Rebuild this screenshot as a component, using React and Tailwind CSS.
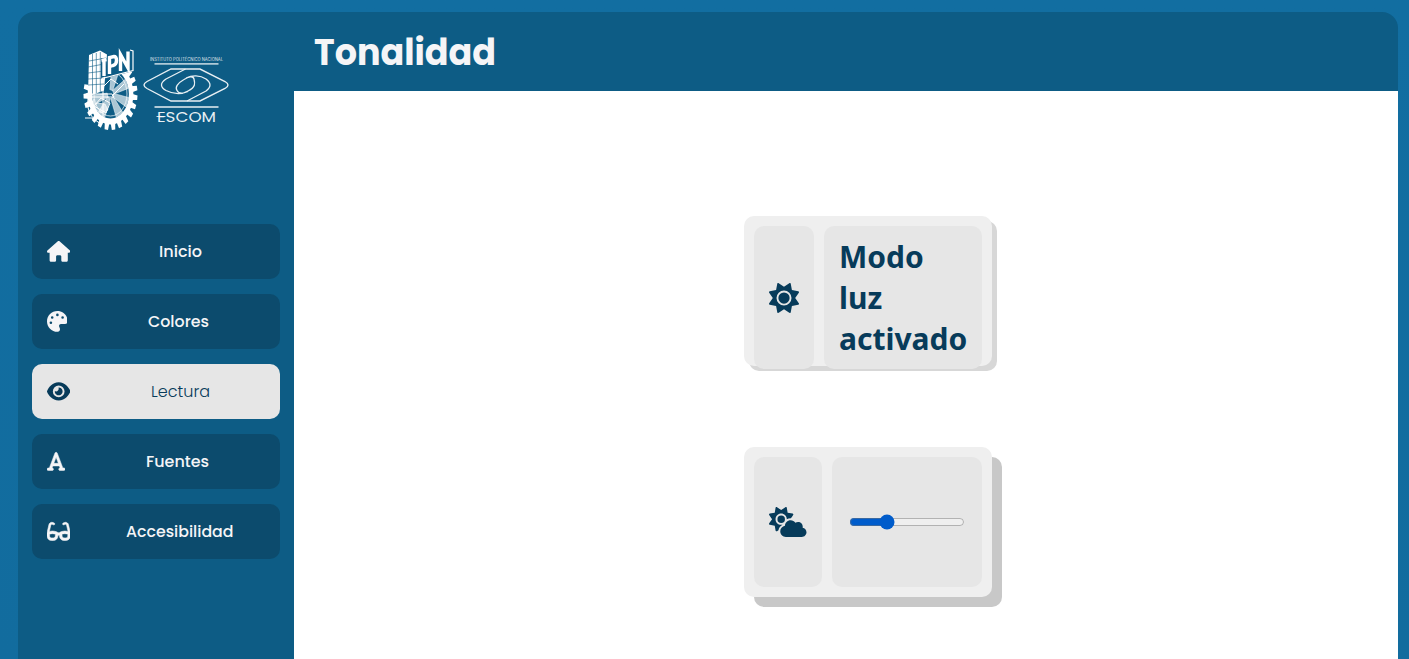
import { FaPalette, FaEye, FaFont, FaGlasses, FaSun, FaCloudSun } from 'react-icons/fa6';

function House({ className }) {
  return (
    <svg viewBox="0 0 576 512" fill="currentColor" className={className}>
      <path d="M575.800 255.500c0 18-15 32.100-32 32.100h-32l.7 160.200c0 2.700-.2 5.400-.5 8.100V472c0 22.100-17.900 40-40 40H392c-22.100 0-40-17.900-40-40v-88c0-17.700-14.300-32-32-32h-64c-17.700 0-32 14.300-32 32v88c0 22.100-17.900 40-40 40h-80c-22.100 0-40-17.900-40-40V287.600H32c-18 0-32-14-32-32.100 0-9 3-17 10-24L266.400 8c7-7 15-8 22-8s15 2 21 7l255.400 224.500c8 7 12 15 11 24z" />
    </svg>
  );
}

const links = [
  { label: 'Inicio', Icon: House, size: 'h-[20.8px] w-[23.4px]' },
  { label: 'Colores', Icon: FaPalette, size: 'h-[20.8px] w-[20.8px]' },
  { label: 'Lectura', Icon: FaEye, size: 'h-[20.8px] w-[23.4px]', active: true },
  { label: 'Fuentes', Icon: FaFont, size: 'h-[20.8px] w-[18.2px] [stroke-width:12px]' },
  { label: 'Accesibilidad', Icon: FaGlasses, size: 'h-[20.8px] w-[23.4px] [stroke-width:14px]' },
];

const widths = { Inicio: 43, Colores: 61, Lectura: 59, Fuentes: 63, Accesibilidad: 107.5 };
const teeth = Array.from({ length: 17 }, (_, i) => -56 + i * 15.5);
const spokes = [-75, -25, 20, 60, 120, 165];

function Logo() {
  return (
    <svg width="150" height="88" viewBox="80 46 150 88" fill="none" stroke="white" className="overflow-visible">
      <g transform="translate(110.5 94) scale(.75 1)">
        {teeth.map((a) => (
          <path key={a} d="M27 -3.3L36 -2.300V2.300L27 3.300z" fill="white" stroke="none" transform={`rotate(${a})`} />
        ))}
        <circle r="27.500" strokeWidth="6" />
        <circle r="22" strokeWidth=".8" />
        {spokes.map((a) => (
          <path key={a} d="M4 -2L24 -5V5L4 2z" fill="white" fillOpacity=".65" strokeWidth=".5" transform={`rotate(${a})`} />
        ))}
      </g>
      <path d="M101 57l31-8 2 2v20l-32 8z" fill="#0d5c85" stroke="none" />
      <path d="M89 55l11-4.500 7 4-3 36-16 6z" fill="white" stroke="none" />
      <path d="M92.500 54v40M96.300 53v40M100.300 52v40M89 61l17-3M88 67l16-3M88 73l16-2M88 79l16-1M88 85l16-1" stroke="#0d5c85" strokeWidth=".6" />
      <path d="M101 58h5.500l.5 18-6 2z" fill="#0d5c85" stroke="none" />
      <path d="M101.500 60.500l5-1M104 60v16M109.500 74V57.500l4.500-1q2.500 0 2.500 4t-3.500 5l-3 1M120.500 71V54.500l7.500 13.500V51.500" strokeWidth="3.400" />
      <path d="M102 78.500l31-8V51l-3-1" strokeWidth="1.200" />
      <path d="M86 94h26l2 3H86zM88 98q-3 18 13 26M94 99q-2 14 9 19M101 98l-7 8 12 7 4-10zM103 86v37M85 118h7l3 4M104 86l7-7 7 5M112 96l12-12" strokeWidth="1" />
      <path d="M96 103l9 1 3 6-7 3-6-4z" fill="white" fillOpacity=".6" strokeWidth=".7" />
      <g opacity=".9">
        <path d="M154.500 63.800h64M154.500 107h64" strokeWidth="1.800" opacity=".75" />
        <path d="M171 69h29l25 12.500q6 3.500 0 7l-25 12.500h-29l-24-12.500q-6-3.500 0-7z" strokeWidth="1.400" />
        <path d="M185.500 69L166 79q-9 6 0 11.500c8 4 16 4 22 .5 8-4 7-8 6-12-1-4-6-2-10 .500-7 4-9 8-7 11 2 4 6 3 11 1M187 101l19-10q8-6 0-12c-6-4-14-4-20-1" strokeWidth="1.300" />
      </g>
      <text x="150" y="61" fontSize="4.300" textLength="73" lengthAdjust="spacingAndGlyphs" fill="white" fillOpacity=".85" stroke="none" fontFamily="Inter, sans-serif">INSTITUTO POLITÉCNICO NACIONAL</text>
      <text x="157" y="121.700" fontSize="14.500" fontWeight="400" textLength="59" lengthAdjust="spacingAndGlyphs" fill="white" fillOpacity=".92" stroke="none" fontFamily="Poppins, Inter, sans-serif">ESCOM</text>
      <path d="M156.500 116.500h9" strokeWidth=".8" />
    </svg>
  );
}

function Label({ text, active }) {
  return (
    <svg width={widths[text]} height="24" className="overflow-visible">
      <text
        x="0" y="18" textLength={widths[text]} lengthAdjust="spacingAndGlyphs"
        className={active ? 'fill-[#073b5a] text-[16px] font-light' : 'fill-[#f5f5f7] text-[16px] font-medium'}
      >{text}</text>
    </svg>
  );
}

export default function App() {
  return (
    <div className="h-[659px] overflow-hidden bg-linear-to-b from-[#126ea1] to-[#126c9e] pt-3 pr-[11px] pl-[18px] font-[Poppins,Inter,sans-serif] [font-feature-settings:'cv11']">
      <div className="flex h-[647px] overflow-hidden rounded-t-[16px] bg-[#0d5c85]">
        <aside className="flex w-[276px] shrink-0 flex-col px-[14px]">
          <div className="h-[212px] pt-[34px] pl-12"><Logo /></div>
          <nav className="flex flex-col gap-[15px]">
            {links.map(({ label, Icon, size, active }) => (
              <a key={label} className={`flex h-[55px] items-center gap-[10px] rounded-[10px] pl-[14.700px] ${active ? 'bg-[#e6e6e6] text-[#073b5a]' : 'bg-[#0c4b6d] text-[#f5f5f7]'}`}>
                <Icon className={`shrink-0 ${size}`} />
                <span className="flex grow justify-center pb-px"><Label text={label} active={active} /></span>
              </a>
            ))}
          </nav>
        </aside>
        <main className="flex grow flex-col">
          <header className="flex h-[79px] items-center pl-[20px]">
            <h1>
              <svg width="182" height="54" className="block overflow-visible" aria-label="Tonalidad">
                <text x="0" y="39.500" textLength="182" lengthAdjust="spacingAndGlyphs" className="fill-[#f5f5f7] text-[36px] font-bold">Tonalidad</text>
              </svg>
            </h1>
          </header>
          <section className="flex grow flex-col gap-[81px] bg-white pt-[125px] pl-[450px]">
            <div className="flex h-[150px] w-[248px] items-start gap-[10px] rounded-[10px] bg-[#efefef] p-[10px] shadow-[5px_5px_0_#d7d7d7]">
              <div className="flex h-[143px] w-[60px] shrink-0 items-center justify-center rounded-[10px] bg-[#e6e6e6] text-[#073b5a]">
                <FaSun className="h-[30px] w-[30px]" />
              </div>
              <div className="h-[143px] w-[158px] shrink-0 rounded-[10px] bg-[#e6e6e6] px-[15px] pt-[10px] font-['Noto_Sans',sans-serif] text-[30px] leading-[41px] font-bold text-[#073b5a]">
                Modo luz activado
              </div>
            </div>
            <div className="flex h-[150px] w-[248px] gap-[10px] rounded-[10px] bg-[#efefef] p-[10px] shadow-[10px_10px_0_#c8c8c8]">
              <div className="flex w-[68px] shrink-0 items-center justify-center rounded-[10px] bg-[#e6e6e6] text-[#073b5a]">
                <FaCloudSun className="h-[30px] w-[37.5px]" />
              </div>
              <div className="flex w-[150px] shrink-0 items-center justify-center rounded-[10px] bg-[#e6e6e6]">
                <input type="range" min="0" max="100" defaultValue="30" aria-label="Tonalidad" className="h-4 w-[116px] accent-[#005ccb]" />
              </div>
            </div>
          </section>
        </main>
      </div>
    </div>
  );
}
